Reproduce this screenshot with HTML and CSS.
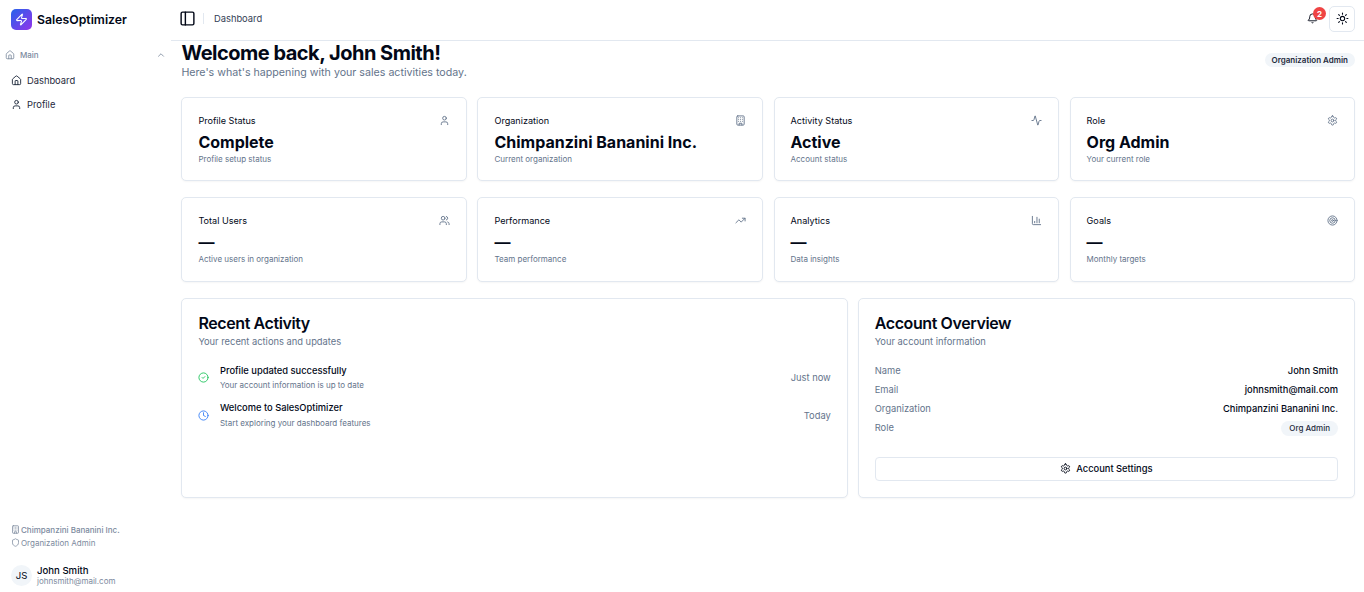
FILE: index.html
```html
<!DOCTYPE html>
<html lang="en">
<head>
    <meta charset="UTF-8">
    <meta name="viewport" content="width=device-width, initial-scale=1.0">
    <title>SalesOptimizer - Dashboard</title>
    <link rel="stylesheet" href="styles.css">
</head>
<body>
    <svg class="sprite" aria-hidden="true">
        <symbol id="i-zap" viewBox="0 0 24 24"><path d="M4 14a1 1 0 0 1-.78-1.63l9.9-10.2a.5.5 0 0 1 .86.46l-1.92 6.02A1 1 0 0 0 13 10h7a1 1 0 0 1 .78 1.63l-9.9 10.2a.5.5 0 0 1-.86-.46l1.92-6.02A1 1 0 0 0 11 14z"/></symbol>
        <symbol id="i-house" viewBox="0 0 24 24"><path d="M15 21v-8a1 1 0 0 0-1-1h-4a1 1 0 0 0-1 1v8"/><path d="M3 10a2 2 0 0 1 .709-1.528l7-5.999a2 2 0 0 1 2.582 0l7 5.999A2 2 0 0 1 21 10v9a2 2 0 0 1-2 2H5a2 2 0 0 1-2-2z"/></symbol>
        <symbol id="i-user" viewBox="0 0 24 24"><path d="M19 21v-2a4 4 0 0 0-4-4H9a4 4 0 0 0-4 4v2"/><circle cx="12" cy="7" r="4"/></symbol>
        <symbol id="i-chevron" viewBox="0 0 24 24"><path d="m18 15-6-6-6 6"/></symbol>
        <symbol id="i-panel" viewBox="0 0 24 24"><rect x="3" y="3" width="18" height="18" rx="2"/><path d="M9 3v18"/></symbol>
        <symbol id="i-bell" viewBox="0 0 24 24"><path d="M10.268 21a2 2 0 0 0 3.464 0"/><path d="M3.262 15.326A1 1 0 0 0 4 17h16a1 1 0 0 0 .74-1.673C19.41 13.956 18 12.499 18 8A6 6 0 0 0 6 8c0 4.499-1.411 5.956-2.738 7.326"/></symbol>
        <symbol id="i-sun" viewBox="0 0 24 24"><circle cx="12" cy="12" r="4"/><path d="M12 2v2"/><path d="M12 20v2"/><path d="m4.93 4.93 1.41 1.41"/><path d="m17.66 17.66 1.41 1.41"/><path d="M2 12h2"/><path d="M20 12h2"/><path d="m6.34 17.66-1.41 1.41"/><path d="m19.07 4.93-1.41 1.41"/></symbol>
        <symbol id="i-building" viewBox="0 0 24 24"><rect x="4" y="2" width="16" height="20" rx="2"/><path d="M9 22v-4h6v4"/><path d="M8 6h.01M16 6h.01M12 6h.01M12 10h.01M12 14h.01M16 10h.01M16 14h.01M8 10h.01M8 14h.01"/></symbol>
        <symbol id="i-activity" viewBox="0 0 24 24"><path d="M22 12h-2.48a2 2 0 0 0-1.93 1.46l-2.35 8.36a.25.25 0 0 1-.48 0L9.24 2.18a.25.25 0 0 0-.48 0l-2.35 8.36A2 2 0 0 1 4.49 12H2"/></symbol>
        <symbol id="i-settings" viewBox="0 0 24 24"><path d="M12.22 2h-.44a2 2 0 0 0-2 2v.18a2 2 0 0 1-1 1.73l-.43.25a2 2 0 0 1-2 0l-.15-.08a2 2 0 0 0-2.73.73l-.22.38a2 2 0 0 0 .73 2.73l.15.1a2 2 0 0 1 1 1.72v.51a2 2 0 0 1-1 1.74l-.15.09a2 2 0 0 0-.73 2.73l.22.38a2 2 0 0 0 2.73.73l.15-.08a2 2 0 0 1 2 0l.43.25a2 2 0 0 1 1 1.73V20a2 2 0 0 0 2 2h.44a2 2 0 0 0 2-2v-.18a2 2 0 0 1 1-1.73l.43-.25a2 2 0 0 1 2 0l.15.08a2 2 0 0 0 2.73-.73l.22-.39a2 2 0 0 0-.73-2.73l-.15-.08a2 2 0 0 1-1-1.74v-.5a2 2 0 0 1 1-1.74l.15-.09a2 2 0 0 0 .73-2.73l-.22-.38a2 2 0 0 0-2.73-.73l-.15.08a2 2 0 0 1-2 0l-.43-.25a2 2 0 0 1-1-1.73V4a2 2 0 0 0-2-2z"/><circle cx="12" cy="12" r="3"/></symbol>
        <symbol id="i-users" viewBox="0 0 24 24"><path d="M16 21v-2a4 4 0 0 0-4-4H6a4 4 0 0 0-4 4v2"/><path d="M16 3.128a4 4 0 0 1 0 7.744"/><path d="M22 21v-2a4 4 0 0 0-3-3.87"/><circle cx="9" cy="7" r="4"/></symbol>
        <symbol id="i-trending" viewBox="0 0 24 24"><path d="M16 7h6v6"/><path d="m22 7-8.5 8.5-5-5L2 17"/></symbol>
        <symbol id="i-chart" viewBox="0 0 24 24"><path d="M3 3v16a2 2 0 0 0 2 2h16"/><path d="M18 17V9"/><path d="M13 17V5"/><path d="M8 17v-3"/></symbol>
        <symbol id="i-target" viewBox="0 0 24 24"><circle cx="12" cy="12" r="10"/><circle cx="12" cy="12" r="6"/><circle cx="12" cy="12" r="2"/></symbol>
        <symbol id="i-check" viewBox="0 0 24 24"><circle cx="12" cy="12" r="10"/><path d="m9 12 2 2 4-4"/></symbol>
        <symbol id="i-clock" viewBox="0 0 24 24"><circle cx="12" cy="12" r="10"/><path d="M12 6v6l4 2"/></symbol>
        <symbol id="i-shield" viewBox="0 0 24 24"><path d="M20 13c0 5-3.5 7.5-7.66 8.95a1 1 0 0 1-.67-.01C7.5 20.5 4 18 4 13V6a1 1 0 0 1 1-1c2 0 4.5-1.2 6.24-2.72a1.17 1.17 0 0 1 1.52 0C14.51 3.81 17 5 19 5a1 1 0 0 1 1 1z"/></symbol>
    </svg>

    <div class="app">
        <aside class="sidebar">
            <div class="brand">
                <span class="brand-logo"><svg class="icon icon-logo"><use href="#i-zap"/></svg></span>
                <span class="brand-name">SalesOptimizer</span>
            </div>
            <div class="nav-group">
                <svg class="icon icon-xs"><use href="#i-house"/></svg>
                <span>Main</span>
                <svg class="icon icon-xs nav-chevron"><use href="#i-chevron"/></svg>
            </div>
            <nav class="nav">
                <a class="nav-item"><svg class="icon icon-sm"><use href="#i-house"/></svg>Dashboard</a>
                <a class="nav-item"><svg class="icon icon-sm"><use href="#i-user"/></svg>Profile</a>
            </nav>
            <div class="side-foot">
                <p class="org-line bold"><svg class="icon icon-xxs"><use href="#i-building"/></svg>Chimpanzini Bananini Inc.</p>
                <p class="org-line"><svg class="icon icon-xxs"><use href="#i-shield"/></svg>Organization Admin</p>
                <div class="side-user">
                    <span class="avatar">JS</span>
                    <div>
                        <div class="side-user-name">John Smith</div>
                        <div class="side-user-mail">johnsmith@mail.com</div>
                    </div>
                </div>
            </div>
        </aside>

        <div class="content">
            <header class="topbar">
                <svg class="icon icon-panel"><use href="#i-panel"/></svg>
                <span class="divider"></span>
                <span class="crumb">Dashboard</span>
                <div class="topbar-right">
                    <span class="bell">
                        <svg class="icon icon-bell"><use href="#i-bell"/></svg>
                        <span class="bell-count">2</span>
                    </span>
                    <button class="theme-btn"><svg class="icon icon-sun"><use href="#i-sun"/></svg></button>
                </div>
            </header>

            <main class="main">
                <div class="welcome">
                    <div>
                        <h1>Welcome back, John Smith!</h1>
                        <p class="welcome-sub">Here's what's happening with your sales activities today.</p>
                    </div>
                    <span class="pill pill-top">Organization Admin</span>
                </div>

                <section class="stats">
                    <div class="card stat">
                        <div class="stat-head">Profile Status<svg class="icon icon-sm muted"><use href="#i-user"/></svg></div>
                        <div class="stat-value">Complete</div>
                        <div class="stat-note">Profile setup status</div>
                    </div>
                    <div class="card stat">
                        <div class="stat-head">Organization<svg class="icon icon-sm muted"><use href="#i-building"/></svg></div>
                        <div class="stat-value">Chimpanzini Bananini Inc.</div>
                        <div class="stat-note">Current organization</div>
                    </div>
                    <div class="card stat">
                        <div class="stat-head">Activity Status<svg class="icon icon-sm muted"><use href="#i-activity"/></svg></div>
                        <div class="stat-value">Active</div>
                        <div class="stat-note">Account status</div>
                    </div>
                    <div class="card stat">
                        <div class="stat-head">Role<svg class="icon icon-sm muted"><use href="#i-settings"/></svg></div>
                        <div class="stat-value">Org Admin</div>
                        <div class="stat-note">Your current role</div>
                    </div>
                </section>

                <section class="stats">
                    <div class="card stat">
                        <div class="stat-head">Total Users<svg class="icon icon-sm muted"><use href="#i-users"/></svg></div>
                        <div class="stat-value">—</div>
                        <div class="stat-note">Active users in organization</div>
                    </div>
                    <div class="card stat">
                        <div class="stat-head">Performance<svg class="icon icon-sm muted"><use href="#i-trending"/></svg></div>
                        <div class="stat-value">—</div>
                        <div class="stat-note">Team performance</div>
                    </div>
                    <div class="card stat">
                        <div class="stat-head">Analytics<svg class="icon icon-sm muted"><use href="#i-chart"/></svg></div>
                        <div class="stat-value">—</div>
                        <div class="stat-note">Data insights</div>
                    </div>
                    <div class="card stat">
                        <div class="stat-head">Goals<svg class="icon icon-sm muted"><use href="#i-target"/></svg></div>
                        <div class="stat-value">—</div>
                        <div class="stat-note">Monthly targets</div>
                    </div>
                </section>

                <section class="panels">
                    <div class="card panel panel-wide">
                        <h2>Recent Activity</h2>
                        <p class="panel-sub">Your recent actions and updates</p>
                        <div class="activity">
                            <svg class="icon icon-sm green"><use href="#i-check"/></svg>
                            <div class="activity-text">
                                <div class="activity-title">Profile updated successfully</div>
                                <div class="activity-note">Your account information is up to date</div>
                            </div>
                            <span class="activity-time">Just now</span>
                        </div>
                        <div class="activity">
                            <svg class="icon icon-sm blue"><use href="#i-clock"/></svg>
                            <div class="activity-text">
                                <div class="activity-title">Welcome to SalesOptimizer</div>
                                <div class="activity-note">Start exploring your dashboard features</div>
                            </div>
                            <span class="activity-time">Today</span>
                        </div>
                    </div>

                    <div class="card panel panel-narrow">
                        <h2>Account Overview</h2>
                        <p class="panel-sub">Your account information</p>
                        <dl class="facts">
                            <div class="fact"><dt>Name</dt><dd>John Smith</dd></div>
                            <div class="fact"><dt>Email</dt><dd>johnsmith@mail.com</dd></div>
                            <div class="fact"><dt>Organization</dt><dd>Chimpanzini Bananini Inc.</dd></div>
                            <div class="fact"><dt>Role</dt><dd><span class="pill pill-sm">Org Admin</span></dd></div>
                        </dl>
                        <button class="wide-btn"><svg class="icon icon-sm"><use href="#i-settings"/></svg>Account Settings</button>
                    </div>
                </section>
            </main>
        </div>
    </div>
</body>
</html>
```

FILE: styles.css
```css
* {
    box-sizing: border-box;
}

body {
    margin: 0;
    font-family: Inter, "Liberation Sans", sans-serif;
    font-size: 10px;
    color: #020817;
    background-color: #ffffff;
}

p, h1, h2, dl, dd {
    margin: 0;
}

.sprite {
    display: none;
}

.icon {
    flex: none;
    fill: none;
    stroke: currentColor;
    stroke-width: 2;
    stroke-linecap: round;
    stroke-linejoin: round;
}

.icon-xxs { width: 9px; height: 9px; }
.icon-xs { width: 10px; height: 10px; }
.icon-sm { width: 11px; height: 11px; }
.icon-bell { width: 11px; height: 11px; }
.icon-sun { width: 13px; height: 13px; }
.icon-panel { width: 17px; height: 17px; margin-left: -2px; }
.icon-logo { width: 13px; height: 13px; color: #ffffff; }

.muted { color: #64748b; }
.green { color: #22c55e; }
.blue { color: #3b82f6; }

.app {
    display: flex;
    height: 100vh;
    overflow: hidden;
}

/* Sidebar */
.sidebar {
    width: 171px;
    flex: none;
    display: flex;
    flex-direction: column;
    padding: 9px 0 0 0;
}

.brand {
    display: flex;
    align-items: center;
    gap: 5px;
    padding-left: 11px;
}

.brand-logo {
    width: 21px;
    height: 21px;
    border-radius: 5px;
    display: flex;
    align-items: center;
    justify-content: center;
    background: linear-gradient(135deg, #2563eb, #9333ea);
}

.brand-name {
    font-size: 12.27px;
    font-weight: 600;
}

.nav-group {
    display: flex;
    align-items: center;
    gap: 5px;
    margin-top: 20px;
    padding: 0 5px 0 5px;
    font-size: 8px;
    font-weight: 500;
    color: #7c8a9e;
}

.nav-chevron {
    margin-left: auto;
}

.nav {
    display: flex;
    flex-direction: column;
    margin-top: 8px;
}

.nav-item {
    display: flex;
    align-items: center;
    gap: 5px;
    height: 24px;
    padding-left: 11px;
    font-size: 9.33px;
    color: #1e293b;
}

.side-foot {
    margin-top: auto;
    padding: 0 11px 6px;
}

.org-line {
    display: flex;
    align-items: center;
    gap: 1px;
    height: 13px;
    font-size: 8px;
    color: #7c8a9e;
}

.org-line.bold {
    font-weight: 500;
}

.side-user {
    display: flex;
    align-items: center;
    gap: 5px;
    margin-top: 16px;
}

.avatar {
    width: 21px;
    height: 21px;
    border-radius: 50%;
    background-color: #f1f5f9;
    display: flex;
    align-items: center;
    justify-content: center;
    font-size: 9.6px;
}

.side-user-name {
    font-size: 9.6px;
    font-weight: 500;
}

.side-user-mail {
    font-size: 8px;
    color: #7c8a9e;
}

/* Top bar */
.content {
    flex: 1;
    min-width: 0;
    display: flex;
    flex-direction: column;
}

.topbar {
    height: 41px;
    flex: none;
    display: flex;
    align-items: center;
    padding: 0 9px 3px 10px;
    border-bottom: 1px solid #e2e8f0;
}

.divider {
    width: 1px;
    height: 11px;
    margin: 0 10px 0 7px;
    background-color: #e2e8f0;
}

.crumb {
    font-size: 9.33px;
    color: #334155;
}

.topbar-right {
    margin-left: auto;
    display: flex;
    align-items: center;
    gap: 11px;
}

.bell {
    position: relative;
    display: flex;
}

.bell-count {
    position: absolute;
    top: -6px;
    right: -8px;
    width: 13px;
    height: 13px;
    border-radius: 50%;
    background-color: #ef4444;
    color: #ffffff;
    font-size: 8px;
    font-weight: 700;
    display: flex;
    align-items: center;
    justify-content: center;
}

.theme-btn {
    width: 26px;
    height: 26px;
    padding: 0;
    border: 1px solid #e2e8f0;
    border-radius: 5px;
    background-color: #ffffff;
    color: #020817;
    display: flex;
    align-items: center;
    justify-content: center;
}

/* Main area */
.main {
    flex: 1;
    min-height: 0;
    padding: 0 9px 0 10.4px;
}

.welcome {
    display: flex;
    justify-content: space-between;
    align-items: flex-start;
    height: 56px;
}

h1 {
    font-size: 20px;
    font-weight: 700;
    line-height: 24px;
    letter-spacing: -0.5px;
}

.welcome-sub {
    margin-top: 1px;
    font-size: 10.67px;
    line-height: 13px;
    color: #64748b;
}

.pill {
    display: inline-block;
    padding: 2px 7px;
    border-radius: 999px;
    background-color: #f1f5f9;
    font-size: 8px;
    line-height: 10px;
    font-weight: 600;
    color: #1e293b;
}

.pill-top {
    margin-top: 12px;
}

.card {
    border: 1px solid #e2e8f0;
    border-radius: 5px;
    background-color: #ffffff;
    box-shadow: 0 1px 2px rgba(0, 0, 0, 0.04);
}

.stats {
    display: grid;
    grid-template-columns: repeat(4, 1fr);
    gap: 10.67px;
    margin-bottom: 16px;
}

.stat {
    height: 84.4px;
    padding: 15px 16px;
}

.stat-head {
    display: flex;
    justify-content: space-between;
    align-items: center;
    height: 14px;
    font-size: 9.1px;
    font-weight: 400;
}

.stat-value {
    margin-top: 3px;
    font-size: 16px;
    font-weight: 700;
    line-height: 24px;
}

.stat-note {
    font-size: 8px;
    color: #64748b;
    line-height: 11px;
}

.panels {
    display: grid;
    grid-template-columns: repeat(7, 1fr);
    gap: 10px;
}

.panel {
    height: 200px;
    padding: 15px 16px 16px;
    display: flex;
    flex-direction: column;
}

.panel-wide {
    grid-column: span 4;
}

.panel-narrow {
    grid-column: span 3;
}

h2 {
    font-size: 16px;
    font-weight: 600;
    line-height: 18px;
    letter-spacing: -0.4px;
}

.panel-sub {
    margin-top: 4px;
    margin-bottom: 15px;
    font-size: 9.33px;
    color: #64748b;
}

.activity {
    display: flex;
    align-items: center;
    gap: 10.6px;
    height: 32px;
    margin-bottom: 5.6px;
}

.activity-text {
    flex: 1;
    padding-top: 1px;
}

.activity-title {
    font-size: 9.33px;
    font-weight: 500;
    line-height: 14.5px;
}

.activity-note {
    font-size: 8px;
    color: #64748b;
    line-height: 14.5px;
}

.activity-time {
    font-size: 9.33px;
    color: #64748b;
}

.facts {
    display: flex;
    flex-direction: column;
    gap: 4.8px;
    margin-top: 2.5px;
}

.fact {
    display: flex;
    justify-content: space-between;
    font-size: 9.33px;
    line-height: 14px;
}

.fact dt {
    color: #64748b;
}

.fact dd {
    font-weight: 500;
}

.pill-sm {
    padding: 2.5px 8px;
    font-weight: 500;
}

.wide-btn {
    margin-top: auto;
    height: 24px;
    display: flex;
    align-items: center;
    justify-content: center;
    gap: 5px;
    border: 1px solid #e2e8f0;
    border-radius: 4px;
    background-color: #ffffff;
    font-family: inherit;
    font-size: 9.33px;
    font-weight: 500;
    color: #020817;
}
```
